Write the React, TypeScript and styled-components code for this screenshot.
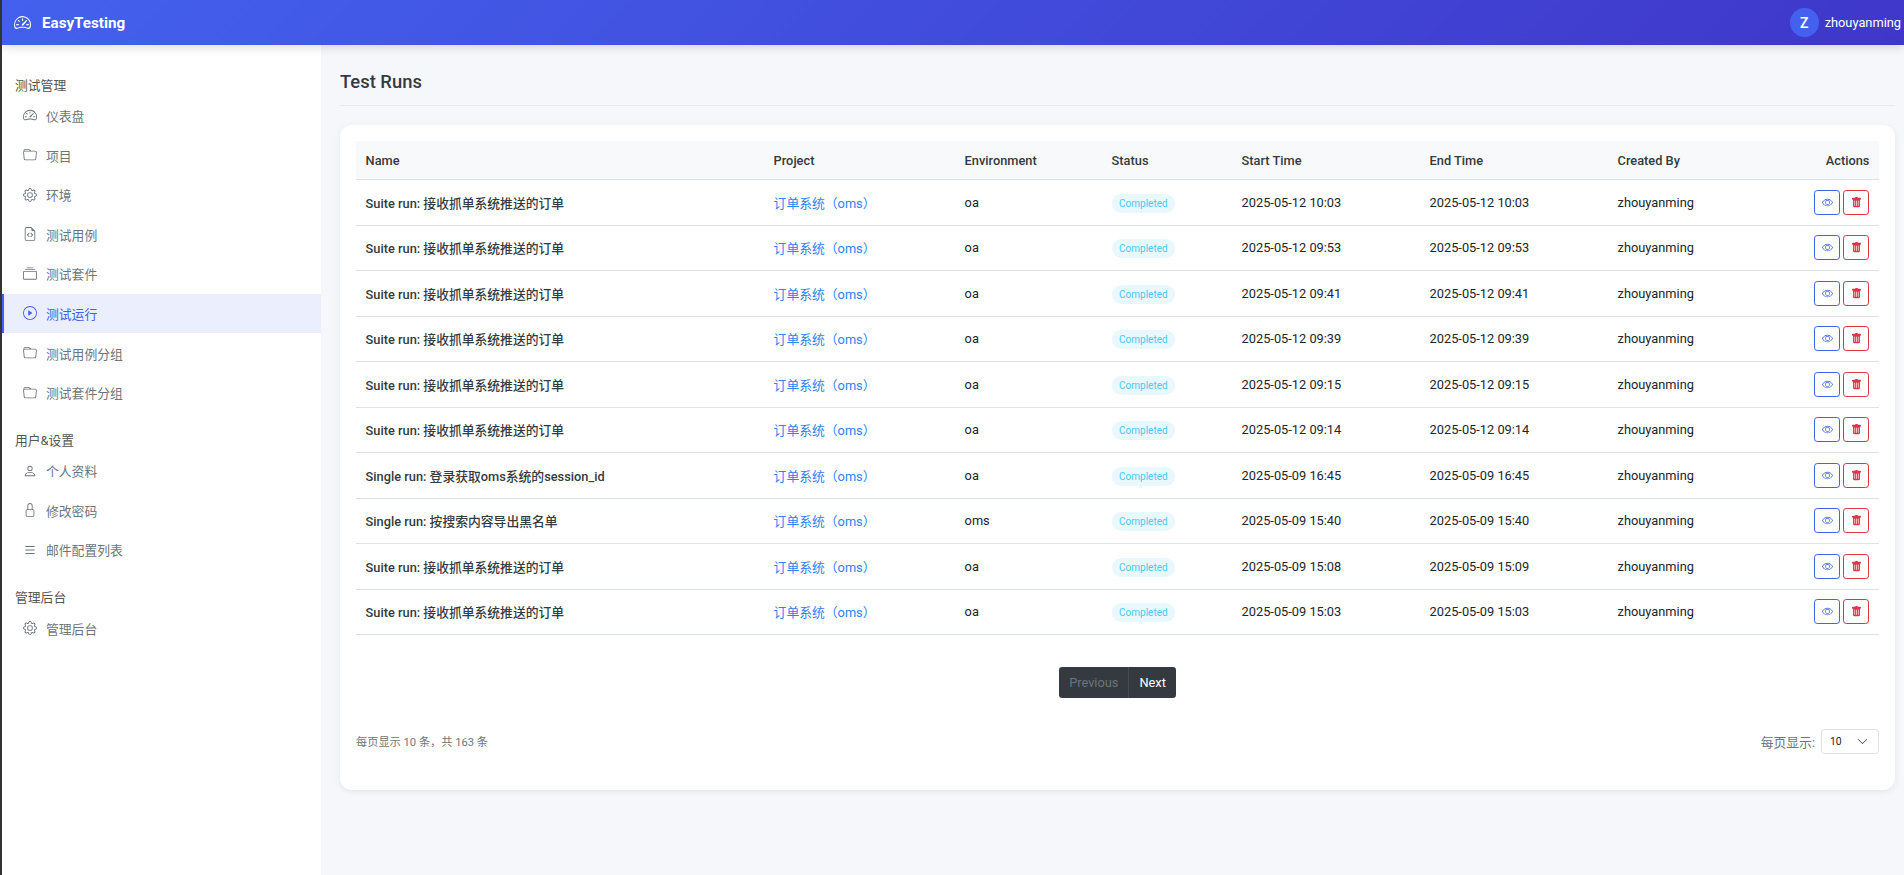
import styled, { createGlobalStyle } from 'styled-components';
import { ReactNode } from 'react';
import {
  BsSpeedometer2,
  BsFolder,
  BsGear,
  BsFileEarmarkCode,
  BsCollection,
  BsPlayCircle,
  BsPerson,
  BsLock,
  BsList,
  BsEye,
  BsTrashFill,
  BsChevronDown,
} from 'react-icons/bs';

type NavItem = { icon: ReactNode; label: string; active?: boolean };

const navSections: { title: string; items: NavItem[] }[] = [
  {
    title: '测试管理',
    items: [
      { icon: <BsSpeedometer2 />, label: '仪表盘' },
      { icon: <BsFolder />, label: '项目' },
      { icon: <BsGear />, label: '环境' },
      { icon: <BsFileEarmarkCode />, label: '测试用例' },
      { icon: <BsCollection />, label: '测试套件' },
      { icon: <BsPlayCircle />, label: '测试运行', active: true },
      { icon: <BsFolder />, label: '测试用例分组' },
      { icon: <BsFolder />, label: '测试套件分组' },
    ],
  },
  {
    title: '用户&设置',
    items: [
      { icon: <BsPerson />, label: '个人资料' },
      { icon: <BsLock />, label: '修改密码' },
      { icon: <BsList />, label: '邮件配置列表' },
    ],
  },
  {
    title: '管理后台',
    items: [{ icon: <BsGear />, label: '管理后台' }],
  },
];

const suiteName = 'Suite run: 接收抓单系统推送的订单';

const runs = [
  { name: suiteName, env: 'oa', start: '2025-05-12 10:03', end: '2025-05-12 10:03' },
  { name: suiteName, env: 'oa', start: '2025-05-12 09:53', end: '2025-05-12 09:53' },
  { name: suiteName, env: 'oa', start: '2025-05-12 09:41', end: '2025-05-12 09:41' },
  { name: suiteName, env: 'oa', start: '2025-05-12 09:39', end: '2025-05-12 09:39' },
  { name: suiteName, env: 'oa', start: '2025-05-12 09:15', end: '2025-05-12 09:15' },
  { name: suiteName, env: 'oa', start: '2025-05-12 09:14', end: '2025-05-12 09:14' },
  { name: 'Single run: 登录获取oms系统的session_id', env: 'oa', start: '2025-05-09 16:45', end: '2025-05-09 16:45' },
  { name: 'Single run: 按搜索内容导出黑名单', env: 'oms', start: '2025-05-09 15:40', end: '2025-05-09 15:40' },
  { name: suiteName, env: 'oa', start: '2025-05-09 15:08', end: '2025-05-09 15:09' },
  { name: suiteName, env: 'oa', start: '2025-05-09 15:03', end: '2025-05-09 15:03' },
];

const App = () => {
  return (
    <Shell>
      <GlobalStyle />
      <TopBar>
        <Brand>
          <BsSpeedometer2 />
          EasyTesting
        </Brand>
        <UserBox>
          <Avatar>Z</Avatar>
          zhouyanming
        </UserBox>
      </TopBar>
      <Body>
        <Sidebar>
          {navSections.map((section) => (
            <NavSection key={section.title}>
              <SectionTitle>{section.title}</SectionTitle>
              {section.items.map((item) => (
                <NavLink key={item.label} $active={item.active}>
                  <NavIcon>{item.icon}</NavIcon>
                  {item.label}
                </NavLink>
              ))}
            </NavSection>
          ))}
        </Sidebar>
        <Main>
          <PageTitle>Test Runs</PageTitle>
          <Card>
            <Table>
              <colgroup>
                <col width={408} />
                <col width={191} />
                <col width={147} />
                <col width={130} />
                <col width={188} />
                <col width={188} />
                <col width={181} />
                <col width={90} />
              </colgroup>
              <thead>
                <tr>
                  <Th>Name</Th>
                  <Th>Project</Th>
                  <Th>Environment</Th>
                  <Th>Status</Th>
                  <Th>Start Time</Th>
                  <Th>End Time</Th>
                  <Th>Created By</Th>
                  <Th $right>Actions</Th>
                </tr>
              </thead>
              <tbody>
                {runs.map((run, i) => (
                  <tr key={i}>
                    <NameCell>{run.name}</NameCell>
                    <Td>
                      <ProjectLink>订单系统（oms）</ProjectLink>
                    </Td>
                    <Td>{run.env}</Td>
                    <Td>
                      <Badge>Completed</Badge>
                    </Td>
                    <Td>{run.start}</Td>
                    <Td>{run.end}</Td>
                    <Td>zhouyanming</Td>
                    <Td $right>
                      <Actions>
                        <ActionButton $color='#4361ee'>
                          <BsEye />
                        </ActionButton>
                        <ActionButton $color='#dc3545'>
                          <BsTrashFill />
                        </ActionButton>
                      </Actions>
                    </Td>
                  </tr>
                ))}
              </tbody>
            </Table>
            <Pagination>
              <PageButton $disabled>Previous</PageButton>
              <PageButton>Next</PageButton>
            </Pagination>
            <Footer>
              <Summary>每页显示 10 条，共 163 条</Summary>
              <PageSize>
                每页显示:
                <SizeSelect>
                  10
                  <BsChevronDown />
                </SizeSelect>
              </PageSize>
            </Footer>
          </Card>
        </Main>
      </Body>
    </Shell>
  );
};

const GlobalStyle = createGlobalStyle`
  html, body {
    margin: 0;
    height: 100%;
  }
  body {
    font-family: Roboto, "Noto Sans CJK SC", sans-serif;
    font-size: 12.8px;
    color: #212529;
    background: #f5f7fb;
  }
  * {
    box-sizing: border-box;
  }
`;

const Shell = styled.div`
  height: 875px;
  border-left: 2px solid #333;
  display: flex;
  flex-direction: column;
  overflow: hidden;
`;

const TopBar = styled.header`
  position: relative;
  z-index: 2;
  flex: none;
  height: 45px;
  padding: 0 3px 0 12px;
  display: flex;
  align-items: center;
  justify-content: space-between;
  color: #fff;
  background: linear-gradient(135deg, #4361ee, #3f37c9);
  box-shadow: 0 2px 10px rgba(0, 0, 0, 0.15);
`;

const Brand = styled.div`
  display: flex;
  align-items: center;
  gap: 11px;
  font-size: 15.2px;
  font-weight: 700;

  svg {
    font-size: 17px;
  }
`;

const UserBox = styled.div`
  display: flex;
  align-items: center;
  gap: 6px;
  font-size: 12.8px;
`;

const Avatar = styled.div`
  width: 29px;
  height: 29px;
  border-radius: 50%;
  background: #4361ee;
  display: flex;
  align-items: center;
  justify-content: center;
  font-size: 14px;
  font-weight: 500;
`;

const Body = styled.div`
  flex: 1;
  display: flex;
  min-height: 0;
`;

const Sidebar = styled.aside`
  flex: none;
  width: 319px;
  padding-top: 28.2px;
  background: #fff;
`;

const NavSection = styled.section`
  margin-bottom: 16px;
`;

const SectionTitle = styled.div`
  height: 22.5px;
  padding-left: 13px;
  display: flex;
  align-items: center;
  color: #555;
`;

const NavLink = styled.a<{ $active?: boolean }>`
  height: 39.6px;
  padding-left: ${(p) => (p.$active ? '19px' : '21px')};
  display: flex;
  align-items: center;
  gap: 9px;
  color: ${(p) => (p.$active ? '#4361ee' : '#6c757d')};
  background: ${(p) => (p.$active ? '#ebeefd' : 'transparent')};
  border-left: ${(p) => (p.$active ? '2px solid #4361ee' : 'none')};
`;

const NavIcon = styled.span`
  width: 14px;
  display: flex;
  justify-content: center;
  font-size: 14px;
`;

const Main = styled.main`
  flex: 1;
  min-width: 0;
  padding: 0 9px 0 19px;
`;

const PageTitle = styled.h1`
  margin: 0 0 19px;
  height: 61px;
  padding-top: 24px;
  font-size: 18.4px;
  line-height: 26px;
  font-weight: 500;
  color: #343a40;
  border-bottom: 1px solid #e6e8ec;
`;

const Card = styled.div`
  padding: 16px 16px 36px;
  border-radius: 12px;
  background: #fff;
  box-shadow: 0 2px 6px rgba(0, 0, 0, 0.07);
`;

const Table = styled.table`
  width: 100%;
  table-layout: fixed;
  border-collapse: separate;
  border-spacing: 0;
`;

const Th = styled.th<{ $right?: boolean }>`
  height: 39px;
  padding: 1px 9.6px 0;
  text-align: ${(p) => (p.$right ? 'right' : 'left')};
  font-weight: 500;
  color: #343a40;
  background: #f8f9fa;
  border-bottom: 1px solid #dee2e6;
`;

const Td = styled.td<{ $right?: boolean }>`
  height: 45.5px;
  padding: 0 9.6px;
  text-align: ${(p) => (p.$right ? 'right' : 'left')};
  border-bottom: 1px solid #dee2e6;
`;

const NameCell = styled(Td)`
  font-weight: 500;
  color: #343a40;
`;

const ProjectLink = styled.a`
  color: #3080ff;
`;

const Badge = styled.span`
  display: inline-block;
  height: 19px;
  margin-top: 2px;
  padding: 0 7.5px;
  line-height: 19px;
  border-radius: 10px;
  font-size: 10px;
  color: #4cc9f0;
  background: #e9f8fd;
`;

const Actions = styled.div`
  display: flex;
  justify-content: flex-end;
  gap: 3px;
`;

const ActionButton = styled.button<{ $color: string }>`
  width: 26px;
  height: 25px;
  padding: 0;
  display: flex;
  align-items: center;
  justify-content: center;
  font-size: 11px;
  color: ${(p) => p.$color};
  background: #fff;
  border: 1px solid ${(p) => p.$color};
  border-radius: 3.2px;
`;

const Pagination = styled.div`
  margin-top: 31.5px;
  display: flex;
  justify-content: center;
`;

const PageButton = styled.button<{ $disabled?: boolean }>`
  height: 31px;
  padding: 0 10px;
  font-family: inherit;
  font-size: 12.8px;
  color: ${(p) => (p.$disabled ? '#6c757d' : '#fff')};
  background: #343a40;
  border: none;
  border-right: ${(p) => (p.$disabled ? '1px solid #454b51' : 'none')};
  border-radius: ${(p) => (p.$disabled ? '3.2px 0 0 3.2px' : '0 3.2px 3.2px 0')};
`;

const Footer = styled.div`
  margin-top: 31px;
  display: flex;
  align-items: center;
  justify-content: space-between;
`;

const Summary = styled.div`
  font-size: 11.2px;
  color: #6c757d;
`;

const PageSize = styled.div`
  display: flex;
  align-items: center;
  gap: 6px;
  color: #6c757d;
`;

const SizeSelect = styled.div`
  width: 58px;
  height: 25px;
  padding: 0 10px 0 8px;
  display: flex;
  align-items: center;
  justify-content: space-between;
  font-size: 10.4px;
  color: #212529;
  background: #fff;
  border: 1px solid #dee2e6;
  border-radius: 3.2px;

  svg {
    font-size: 11px;
    color: #343a40;
  }
`;

export default App;
